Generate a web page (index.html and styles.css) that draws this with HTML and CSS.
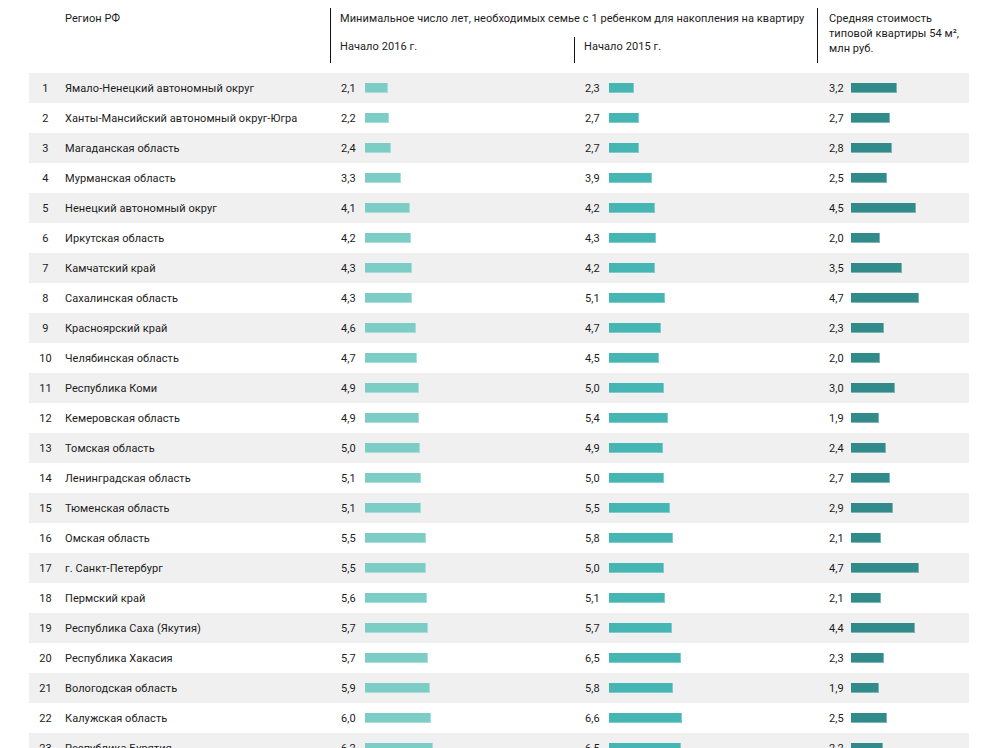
FILE: index.html
```html
<!DOCTYPE html>
<html lang="ru">
<head>
<meta charset="utf-8">
<link rel="stylesheet" href="styles.css">
</head>
<body>
<div class="wrap">
  <div class="head">
    <div class="h-num"></div>
    <div class="h-region">Регион РФ</div>
    <div class="h-group">
      <div class="h-title">Минимальное число лет, необходимых семье с 1 ребенком для накопления на квартиру</div>
      <div class="h-subs">
        <div class="h-sub">Начало 2016 г.</div>
        <div class="h-sub h-sub2">Начало 2015 г.</div>
      </div>
    </div>
    <div class="h-cost">Средняя стоимость<br>типовой квартиры 54 м²,<br>млн руб.</div>
  </div>
  <div class="rows" id="rows"></div>
</div>
<script src="app.js"></script>
</body>
</html>
```

FILE: app.js
```js
const data = [
  [1, "Ямало-Ненецкий автономный округ", "2,1", "2,3", "3,2"],
  [2, "Ханты-Мансийский автономный округ-Югра", "2,2", "2,7", "2,7"],
  [3, "Магаданская область", "2,4", "2,7", "2,8"],
  [4, "Мурманская область", "3,3", "3,9", "2,5"],
  [5, "Ненецкий автономный округ", "4,1", "4,2", "4,5"],
  [6, "Иркутская область", "4,2", "4,3", "2,0"],
  [7, "Камчатский край", "4,3", "4,2", "3,5"],
  [8, "Сахалинская область", "4,3", "5,1", "4,7"],
  [9, "Красноярский край", "4,6", "4,7", "2,3"],
  [10, "Челябинская область", "4,7", "4,5", "2,0"],
  [11, "Республика Коми", "4,9", "5,0", "3,0"],
  [12, "Кемеровская область", "4,9", "5,4", "1,9"],
  [13, "Томская область", "5,0", "4,9", "2,4"],
  [14, "Ленинградская область", "5,1", "5,0", "2,7"],
  [15, "Тюменская область", "5,1", "5,5", "2,9"],
  [16, "Омская область", "5,5", "5,8", "2,1"],
  [17, "г. Санкт-Петербург", "5,5", "5,0", "4,7"],
  [18, "Пермский край", "5,6", "5,1", "2,1"],
  [19, "Республика Саха (Якутия)", "5,7", "5,7", "4,4"],
  [20, "Республика Хакасия", "5,7", "6,5", "2,3"],
  [21, "Вологодская область", "5,9", "5,8", "1,9"],
  [22, "Калужская область", "6,0", "6,6", "2,5"],
  [23, "Республика Бурятия", "6,2", "6,5", "2,2"]
];
const num = s => parseFloat(s.replace(",", "."));
const rows = document.getElementById("rows");
data.forEach(d => {
  const row = document.createElement("div");
  row.className = "row";
  row.innerHTML =
    `<div class="c-num">${d[0]}</div>` +
    `<div class="c-region">${d[1]}</div>` +
    `<div class="c-val"><span class="v">${d[2]}</span><span class="bar b1" style="width:${Math.round(num(d[2]) * 11)}px"></span></div>` +
    `<div class="c-val"><span class="v">${d[3]}</span><span class="bar b2" style="width:${Math.round(num(d[3]) * 11)}px"></span></div>` +
    `<div class="c-val c-last"><span class="v">${d[4]}</span><span class="bar b3" style="width:${Math.round(num(d[4]) * 14.5)}px"></span></div>`;
  rows.appendChild(row);
});
```

FILE: styles.css
```css
* { box-sizing: border-box; }
body {
  margin: 0;
  background: #fff;
  color: #1c1c1c;
  font-family: Roboto, "Noto Sans", sans-serif;
  font-size: 11px;
  line-height: 15px;
  letter-spacing: 0.07px;
}
.wrap {
  width: 940px;
  margin-left: 29px;
  padding-top: 8px;
}
.head, .row {
  display: grid;
  grid-template-columns: 36px 265px 244px 243px 152px;
}
.head {
  height: 55px;
  margin-bottom: 10px;
}
.h-region {
  padding-top: 3px;
}
.h-group {
  grid-column: span 2;
  border-left: 1px solid #111;
  display: flex;
  flex-direction: column;
}
.h-title {
  padding: 3px 0 0 9px;
  white-space: nowrap;
}
.h-subs {
  display: grid;
  grid-template-columns: 243px 243px;
  margin-top: auto;
  height: 26px;
}
.h-sub {
  padding: 2px 0 0 9px;
}
.h-sub2 {
  border-left: 1px solid #111;
}
.h-cost {
  border-left: 1px solid #111;
  padding: 3px 0 0 11px;
}
.row {
  height: 30px;
  align-items: center;
}
.row:nth-child(odd) {
  background: #f0f0f0;
}
.c-num {
  text-align: center;
  padding-right: 3px;
}
.c-val {
  display: flex;
  align-items: center;
  padding-left: 11px;
}
.c-last {
  padding-left: 12px;
}
.v {
  width: 24px;
  flex: none;
}
.c-last .v {
  width: 22px;
}
.bar {
  display: block;
  height: 10px;
  margin-top: -1px;
}
.b1 { background: #7dcdc7; box-shadow: inset -1px -1px 0 #a9ddd9; }
.b2 { background: #45b6b3; box-shadow: inset -1px -1px 0 #7fcdca; }
.b3 { background: #318b8b; box-shadow: inset -1px -1px 0 #7fb4b4; }
```
